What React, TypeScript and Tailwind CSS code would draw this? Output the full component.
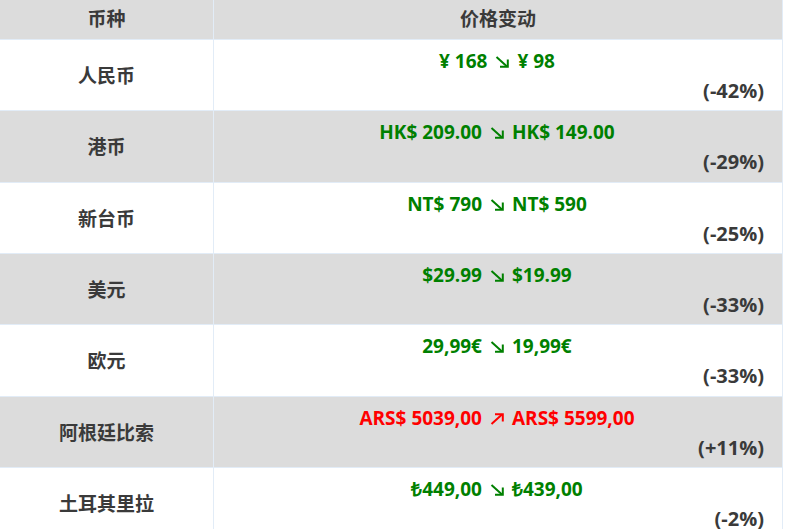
const rows = [
  { name: '人民币', from: '¥ 168', to: '¥ 98', up: false, pct: '(-42%)' },
  { name: '港币', from: 'HK$ 209.00', to: 'HK$ 149.00', up: false, pct: '(-29%)' },
  { name: '新台币', from: 'NT$ 790', to: 'NT$ 590', up: false, pct: '(-25%)' },
  { name: '美元', from: '$29.99', to: '$19.99', up: false, pct: '(-33%)' },
  { name: '欧元', from: '29,99€', to: '19,99€', up: false, pct: '(-33%)' },
  { name: '阿根廷比索', from: 'ARS$ 5039,00', to: 'ARS$ 5599,00', up: true, pct: '(+11%)' },
  { name: '土耳其里拉', from: '₺449,00', to: '₺439,00', up: false, pct: '(-2%)' },
]

function Arrow({ up }: { up: boolean }) {
  return (
    <svg
      width="14"
      height="12"
      viewBox="0 0 14 12"
      className="mx-2 inline-block align-baseline"
      fill="none"
      stroke="currentColor"
      strokeWidth="2"
    >
      {up ? (
        <>
          <path d="M1.5 11 L12 1.5" />
          <path d="M6 1.2 H12.8 V7.5" strokeLinecap="square" />
        </>
      ) : (
        <>
          <path d="M1.5 1 L12 10.5" />
          <path d="M6 10.8 H12.8 V4.5" strokeLinecap="square" />
        </>
      )}
    </svg>
  )
}

export default function App() {
  return (
    <div className="min-h-screen bg-white font-['Open_Sans','Noto_Sans_CJK_SC',sans-serif] text-[19px] font-bold text-[#3a3a3a]">
      <div className="grid w-[783px] grid-cols-[214px_569px]">
        <div className="flex h-[40px] items-center justify-center border-r border-b border-[#e2ecf7] bg-[#dcdcdc]">币种</div>
        <div className="flex h-[40px] items-center justify-center border-r border-b border-[#e2ecf7] bg-[#dcdcdc]">价格变动</div>
        {rows.map((r, i) => {
          const bg = i % 2 === 0 ? 'bg-white' : 'bg-[#dcdcdc]'
          return [
            <div key={r.name + 'a'} className={`flex h-[71.33px] items-center justify-center border-r border-b border-[#e2ecf7] pt-[2px] ${bg}`}>
              {r.name}
            </div>,
            <div key={r.name + 'b'} className={`flex h-[71.33px] flex-col border-r border-b border-[#e2ecf7] pt-[8px] pr-[18px] pl-4 ${bg}`}>
              <div className={r.up ? 'text-center leading-[26px] text-[#ff0000]' : 'text-center leading-[26px] text-[#008000]'}>
                {r.from}
                <Arrow up={r.up} />
                {r.to}
              </div>
              <div className="mt-[4px] text-right text-[20px] leading-[26px]">{r.pct}</div>
            </div>,
          ]
        })}
      </div>
    </div>
  )
}
